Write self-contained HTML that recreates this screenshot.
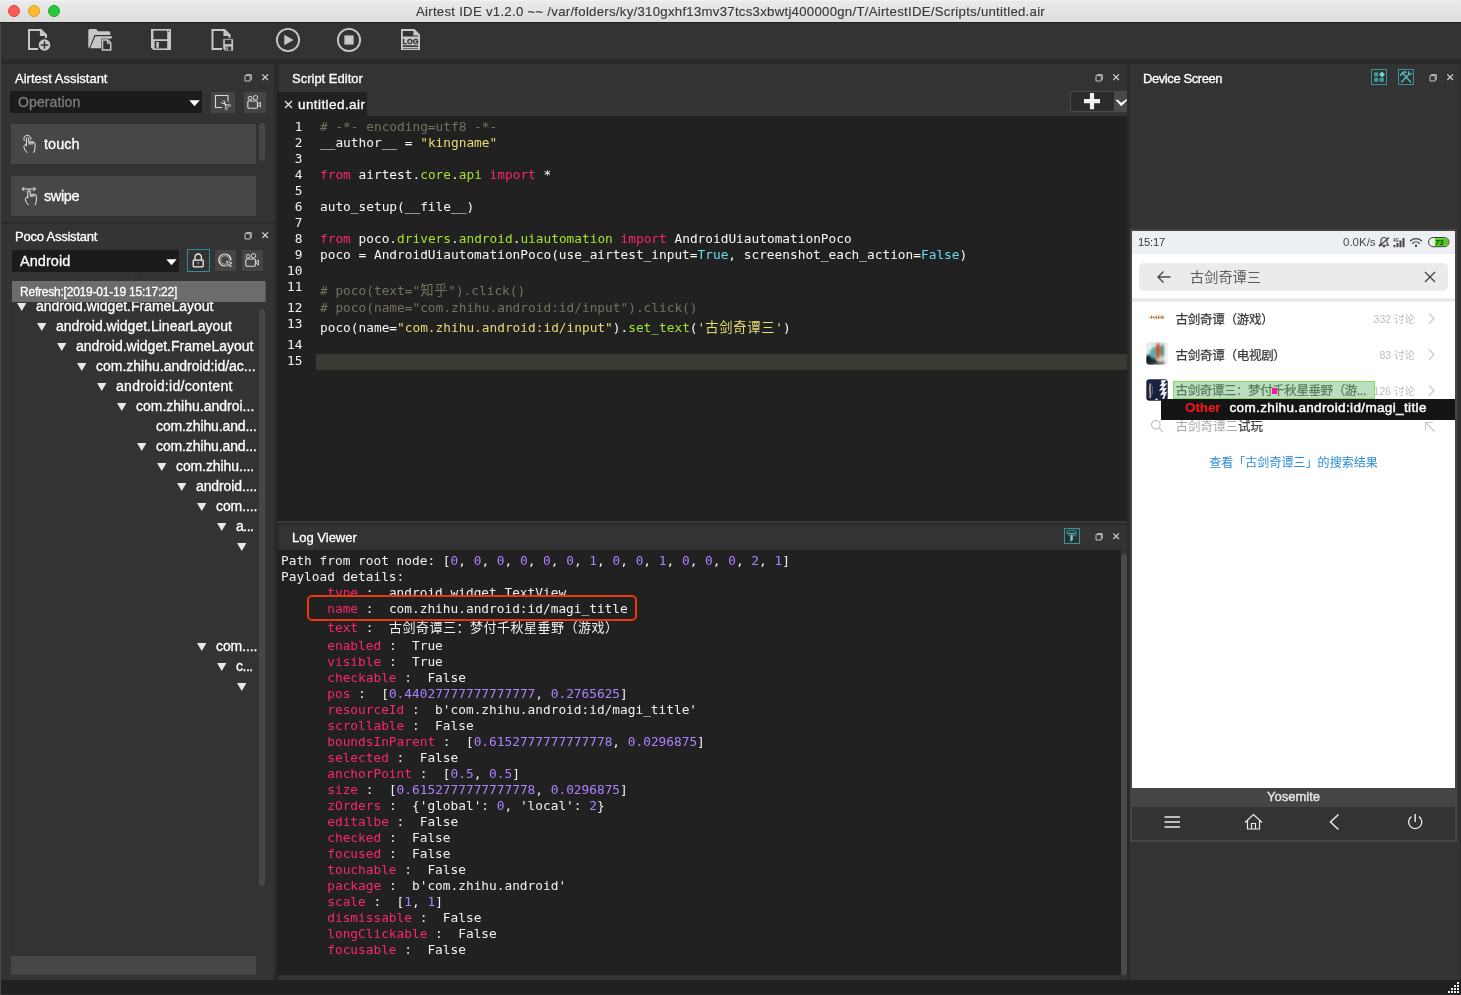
<!DOCTYPE html>
<html><head><meta charset="utf-8"><title>Airtest IDE</title>
<style>
*{box-sizing:border-box;margin:0;padding:0}
html,body{width:1461px;height:995px;overflow:hidden;background:#2a2a2a}
body{position:relative;font-family:"Liberation Sans","Noto Sans CJK SC",sans-serif;color:#f0f0f0;font-size:13px}
.abs{position:absolute}
#titlebar{left:0;top:0;width:1461px;height:22px;background:linear-gradient(#f4f4f4 0,#eaeaea 1.5px,#dcdcdc 100%);color:#3a3a3a;font-size:13.2px;letter-spacing:0.275px;text-align:center;line-height:23px;-webkit-text-stroke:0.15px #3a3a3a}
.tl{position:absolute;top:5px;width:12px;height:12px;border-radius:50%}
#toolbar{left:0;top:22px;width:1461px;height:37px;background:#333;border-top:1px solid #202020}
.panel{background:#333}
.ptitle{position:absolute;font-size:13px;color:#fff;white-space:nowrap;-webkit-text-stroke:0.3px #fff}
.ui{white-space:nowrap;-webkit-text-stroke:0.3px currentColor}
.mono{font-family:"DejaVu Sans Mono","Liberation Mono","Noto Sans CJK SC",monospace;font-size:12.8px;white-space:pre}
.pt{font-size:12.500px;line-height:17px;color:#3a3a3a;white-space:nowrap;-webkit-text-stroke:0.25px #3a3a3a}
.pt,.pr{filter:blur(0.25px)}
.pr{font-size:10.500px;line-height:14px;color:#bdbdbd;white-space:nowrap}
.cj2{font-size:13px;letter-spacing:0.5px}
.cj{font-size:13.3px;letter-spacing:0.7px}
#statusbar{left:0;top:980px;width:1461px;height:15px;background:#212121;border-bottom:1px solid #2b2b2b}
#root{position:absolute;left:0;top:0;width:1461px;height:995px;will-change:transform;background:#2a2a2a}
</style></head><body><div id="root">
<div id="titlebar" class="abs">Airtest IDE v1.2.0 ~~ /var/folders/ky/310gxhf13mv37tcs3xbwtj400000gn/T/AirtestIDE/Scripts/untitled.air
<div class="tl" style="left:8px;background:#fc5b57;border:0.5px solid #df4744"></div>
<div class="tl" style="left:28px;background:#fdbc2e;border:0.5px solid #de9f1b"></div>
<div class="tl" style="left:48px;background:#28c83f;border:0.5px solid #1ba92b"></div>
</div>
<div class="abs" style="left:0;top:23px;width:1px;height:972px;background:#474747;z-index:5"></div>
<div id="toolbar" class="abs"><svg class="abs" style="left:0;top:-1px" width="440" height="37" viewBox="0 22 440 37">
<g fill="none" stroke="#c5c7c9" stroke-width="2">
<!-- new file -->
<path d="M38 49H29V30H41L46 35V38"/><path d="M40.500 30V35.500H46Z" stroke-width="1.200" fill="#c5c7c9"/>
<!-- save-as file -->
<path d="M222 49H212.500V30H224.500L229.500 35V38"/><path d="M224 30V35.500H229.500Z" stroke-width="1.200" fill="#c5c7c9"/>
</g>
<circle cx="44.500" cy="45" r="5.800" fill="#c5c7c9"/>
<path d="M44.500 41.200V48.800M40.700 45H48.300" stroke="#333" stroke-width="1.500"/>
<!-- folder -->
<path d="M88.300 47.500V30.500Q88.300 29 89.800 29H96.200L98 31.300H109Q110.300 31.300 110.300 32.600V35H94.500L89.500 47.500Z" fill="#c5c7c9"/>
<path d="M95.300 36.200H112.200L107.500 48.300H90.200Z" fill="#c5c7c9"/>
<rect x="101.200" y="38.600" width="10.600" height="12.400" fill="#333"/>
<path d="M102.500 40H108L110.700 42.700V49.900H102.500Z" fill="#333" stroke="#c5c7c9" stroke-width="1.500"/>
<path d="M107.500 40V43.200H110.700" fill="none" stroke="#c5c7c9" stroke-width="1.200"/>
<!-- save -->
<path d="M151 29H171V50H153.500L151 47.500Z" fill="#c5c7c9"/>
<rect x="153.400" y="30.600" width="13.800" height="8.600" fill="#333"/>
<rect x="168.300" y="30.600" width="1.200" height="1.200" fill="#333"/>
<rect x="154.600" y="41" width="12.600" height="7.400" fill="#333"/>
<rect x="156.300" y="42" width="2.500" height="5.800" fill="#c5c7c9"/>
<!-- save-as floppy -->
<path d="M222.800 38.800H233.500V51H225L222.800 48.800Z" fill="#c5c7c9" stroke="#333" stroke-width="0.800"/>
<rect x="224.800" y="40" width="6.600" height="4.200" fill="#333"/>
<rect x="225.600" y="46.600" width="5.600" height="3.600" fill="#333"/>
<rect x="226.400" y="47.200" width="1.400" height="2.600" fill="#c5c7c9"/>
<!-- play -->
<circle cx="288" cy="40" r="11.100" fill="none" stroke="#c5c7c9" stroke-width="1.900"/>
<path d="M284.300 34.800L293.600 40L284.300 45.200Z" fill="#c5c7c9"/>
<!-- stop -->
<circle cx="349" cy="40" r="11.100" fill="none" stroke="#c5c7c9" stroke-width="1.900"/>
<rect x="344.400" y="35.400" width="9.200" height="9.200" fill="#c5c7c9"/>
<!-- log -->
<path d="M401 29H414.500L420 34.500V50H401Z" fill="#c5c7c9"/>
<path d="M402.800 31H413.400V35.600H418.200V36.600H402.800Z" fill="#333"/>
<rect x="402.800" y="45.300" width="15.400" height="1.600" fill="#333"/>
<rect x="402.800" y="48.100" width="15.400" height="0.600" fill="#333"/>
<text x="410.500" y="43.600" text-anchor="middle" font-family="Liberation Sans, sans-serif" font-weight="bold" font-size="7.400" fill="#333" stroke="#333" stroke-width="0.300">LOG</text>
</svg>
</div>

<!-- Airtest Assistant -->
<div id="airtest" class="abs panel" style="left:3px;top:64px;width:271px;height:158px;box-shadow:-2px 0 0 #333"><div class="ptitle" style="left:12px;top:7px">Airtest Assistant</div>
<svg class="abs fc" style="left:241px;top:9px" width="26" height="9" viewBox="0 0 26 9"><path d="M2.200 1.600H7.300V6.800M1 2.600H6.200V8H1Z" fill="none" stroke="#c2c2c2" stroke-width="1" stroke-linejoin="round"/><path d="M18.300 1.300L24 7M24 1.300L18.300 7" stroke="#d0d0d0" stroke-width="1.200" fill="none"/></svg>
<div class="abs" style="left:7px;top:27px;width:192px;height:22px;background:#1b1b1b"></div>
<div class="abs ui" style="left:15px;top:30px;font-size:14px;color:#7d7d7d;letter-spacing:0.1px">Operation</div>
<svg class="abs" style="left:186px;top:36px" width="11" height="7" viewBox="0 0 11 7"><path d="M0.300 0.300H10.700L5.500 6.300Z" fill="#fff"/></svg>
<div class="abs" style="left:207.500px;top:27.500px;width:24px;height:21px;background:#454545"></div>
<svg class="abs" style="left:210px;top:29px" width="20" height="18" viewBox="0 0 20 18"><path d="M9 14.500H2.500V2.500H15V8.500" fill="none" stroke="#dadada" stroke-width="1.100"/><path d="M8 9.600L15.500 12.400M10.800 7.200L13.200 14.600" stroke="#e0e0e0" stroke-width="1" fill="none"/><circle cx="16.300" cy="12.400" r="1.200" fill="none" stroke="#d0d0d0" stroke-width="0.800"/><circle cx="13.200" cy="15.500" r="1.200" fill="none" stroke="#d0d0d0" stroke-width="0.800"/></svg>
<div class="abs" style="left:240.500px;top:27.500px;width:22px;height:21px;background:#454545"></div>
<svg class="abs cam" style="left:243px;top:30px" width="18" height="16" viewBox="0 0 18 16"><rect x="1.800" y="7" width="9.600" height="7.200" rx="1.200" fill="none" stroke="#dadada" stroke-width="1.100"/><circle cx="4" cy="4.200" r="1.900" fill="none" stroke="#dadada" stroke-width="1"/><circle cx="9.500" cy="3.700" r="2.200" fill="none" stroke="#dadada" stroke-width="1"/><path d="M11.600 10.500L14.400 8.200V13L11.600 10.800" fill="none" stroke="#dadada" stroke-width="1"/></svg>
<!-- list -->
<div class="abs" style="left:8px;top:60px;width:245px;height:40px;background:#474747"></div>
<div class="abs" style="left:8px;top:112px;width:245px;height:40px;background:#474747"></div>
<div class="abs" style="left:256px;top:59px;width:6px;height:38px;background:#474747;border-radius:3px"></div>
<div class="abs ui" style="left:41px;top:72px;font-size:14.500px;color:#fff;letter-spacing:0.05px">touch</div>
<div class="abs ui" style="left:41px;top:124px;font-size:14.500px;color:#fff;letter-spacing:-0.4px">swipe</div>
<!-- touch icon -->
<svg class="abs" style="left:19px;top:70px" width="16" height="20" viewBox="0 0 16 20"><g fill="none" stroke="#ececec" stroke-width="1" stroke-linecap="round"><path d="M2.200 6.500A3.600 3.600 0 1 1 9 5.200"/><path d="M4.400 12V4.800Q4.400 3.600 5.600 3.600Q6.800 3.600 6.800 4.800V8H11.200Q13 8 13 10V13.500Q13 16 11.800 18.500"/><path d="M4.400 10.200L2.600 11.300Q1.500 12 2 13.600Q2.800 16.600 5 18.500"/><path d="M8.600 8V10M10.600 8V10" stroke-width="0.900"/></g><rect x="6.400" y="7.600" width="3.200" height="2.800" fill="#bdbdbd"/></svg>
<!-- swipe icon -->
<svg class="abs" style="left:18px;top:122px" width="18" height="20" viewBox="0 0 18 20"><g fill="none" stroke="#ececec" stroke-width="1" stroke-linecap="round"><path d="M1.200 3H14.400M3 1.200L1.200 3L3 4.800M12.600 1.200L14.400 3L12.600 4.800"/><g transform="translate(1.200,0)"><path d="M5.600 12V4.800H8V8.400H12.400Q14.200 8.400 14.200 10.400V13.900Q14.200 16.400 13 18.900"/><path d="M5.600 10.600L3.800 11.700Q2.700 12.400 3.200 14Q4 17 6.200 18.900"/><path d="M9.800 8.400V10.400M11.800 8.400V10.400" stroke-width="0.900"/></g></g><rect x="8.800" y="8" width="3.200" height="2.800" fill="#bdbdbd"/></svg>
</div>
<!-- Poco Assistant -->
<div id="poco" class="abs panel" style="left:3px;top:222px;width:271px;height:758px;box-shadow:-2px 0 0 #333"><div class="ptitle" style="left:12px;top:7px;letter-spacing:-0.22px">Poco Assistant</div>
<svg class="abs fc" style="left:241px;top:9px" width="26" height="9" viewBox="0 0 26 9"><path d="M2.200 1.600H7.300V6.800M1 2.600H6.200V8H1Z" fill="none" stroke="#c2c2c2" stroke-width="1" stroke-linejoin="round"/><path d="M18.300 1.300L24 7M24 1.300L18.300 7" stroke="#d0d0d0" stroke-width="1.200" fill="none"/></svg>
<div class="abs" style="left:9px;top:28px;width:167px;height:22px;background:#1b1b1b"></div>
<div class="abs ui" style="left:17px;top:31px;font-size:14.500px;color:#fff;letter-spacing:0.05px">Android</div>
<svg class="abs" style="left:163px;top:37px" width="11" height="7" viewBox="0 0 11 7"><path d="M0.300 0.300H10.700L5.500 6.300Z" fill="#fff"/></svg>
<div class="abs" style="left:184px;top:27px;width:23px;height:23px;background:#323232;border:1px solid #2f8e98"></div>
<svg class="abs" style="left:187px;top:30px" width="17" height="17" viewBox="0 0 17 17"><rect x="3.200" y="8.200" width="10" height="6.600" rx="0.800" fill="none" stroke="#efefef" stroke-width="1.300"/><path d="M5 8V5.200A3.200 3.200 0 0 1 11.400 5.200V8" fill="none" stroke="#efefef" stroke-width="1.300"/><path d="M7.200 10.800H9.200M7.700 12H8.700" stroke="#cfcfcf" stroke-width="0.700"/></svg>
<div class="abs" style="left:211.800px;top:27.600px;width:21.500px;height:21.700px;background:#454545"></div>
<svg class="abs" style="left:214px;top:30px" width="18" height="17" viewBox="0 0 18 17"><path d="M8.800 13.900A6 6 0 1 1 13.800 8.600" fill="none" stroke="#e6e6e6" stroke-width="1.200"/><path d="M8.800 12.200A4.300 4.300 0 1 1 12.200 8.200" fill="none" stroke="#bdbdbd" stroke-width="0.800"/><path d="M9.600 9.200L15 10.900L12.800 11.900L14.400 14.300L13.300 15L11.800 12.600L10.400 14.200Z" fill="#5a5a5a" stroke="#e6e6e6" stroke-width="0.800" stroke-linejoin="round"/></svg>
<div class="abs" style="left:238.600px;top:27.600px;width:21.800px;height:21.700px;background:#454545"></div>
<svg class="abs cam" style="left:241px;top:30px" width="18" height="16" viewBox="0 0 18 16"><rect x="1.800" y="7" width="9.600" height="7.200" rx="1.200" fill="none" stroke="#dadada" stroke-width="1.100"/><circle cx="4" cy="4.200" r="1.900" fill="none" stroke="#dadada" stroke-width="1"/><circle cx="9.500" cy="3.700" r="2.200" fill="none" stroke="#dadada" stroke-width="1"/><path d="M11.600 10.500L14.400 8.200V13L11.600 10.800" fill="none" stroke="#dadada" stroke-width="1"/></svg>
<div class="abs" style="left:132px;top:53px;width:6px;height:4px;border:1px solid #2b2b2b;border-bottom:none;border-radius:3px 3px 0 0"></div>
<svg class="abs" style="left:13.5px;top:80.5px" width="9.500" height="8" viewBox="0 0 9.500 8"><path d="M0 0H9.500L4.750 8Z" fill="#e9e9e9"/></svg>
<div class="abs ui tr" style="left:33px;top:76px;font-size:14px;line-height:17px;color:#fff;letter-spacing:0px">android.widget.FrameLayout</div>
<svg class="abs" style="left:33.5px;top:100.5px" width="9.500" height="8" viewBox="0 0 9.500 8"><path d="M0 0H9.500L4.750 8Z" fill="#e9e9e9"/></svg>
<div class="abs ui tr" style="left:53px;top:96px;font-size:14px;line-height:17px;color:#fff;letter-spacing:0px">android.widget.LinearLayout</div>
<svg class="abs" style="left:53.5px;top:120.5px" width="9.500" height="8" viewBox="0 0 9.500 8"><path d="M0 0H9.500L4.750 8Z" fill="#e9e9e9"/></svg>
<div class="abs ui tr" style="left:73px;top:116px;font-size:14px;line-height:17px;color:#fff;letter-spacing:0px">android.widget.FrameLayout</div>
<svg class="abs" style="left:73.5px;top:140.5px" width="9.500" height="8" viewBox="0 0 9.500 8"><path d="M0 0H9.500L4.750 8Z" fill="#e9e9e9"/></svg>
<div class="abs ui tr" style="left:93px;top:136px;font-size:14px;line-height:17px;color:#fff;letter-spacing:0px">com.zhihu.android:id/ac...</div>
<svg class="abs" style="left:93.5px;top:160.5px" width="9.500" height="8" viewBox="0 0 9.500 8"><path d="M0 0H9.500L4.750 8Z" fill="#e9e9e9"/></svg>
<div class="abs ui tr" style="left:113px;top:156px;font-size:14px;line-height:17px;color:#fff;letter-spacing:0.3px">android:id/content</div>
<svg class="abs" style="left:113.5px;top:180.5px" width="9.500" height="8" viewBox="0 0 9.500 8"><path d="M0 0H9.500L4.750 8Z" fill="#e9e9e9"/></svg>
<div class="abs ui tr" style="left:133px;top:176px;font-size:14px;line-height:17px;color:#fff;letter-spacing:0px">com.zhihu.androi...</div>
<div class="abs ui tr" style="left:153px;top:196px;font-size:14px;line-height:17px;color:#fff;letter-spacing:-0.12px">com.zhihu.and...</div>
<svg class="abs" style="left:133.5px;top:220.5px" width="9.500" height="8" viewBox="0 0 9.500 8"><path d="M0 0H9.500L4.750 8Z" fill="#e9e9e9"/></svg>
<div class="abs ui tr" style="left:153px;top:216px;font-size:14px;line-height:17px;color:#fff;letter-spacing:-0.12px">com.zhihu.and...</div>
<svg class="abs" style="left:153.5px;top:240.5px" width="9.500" height="8" viewBox="0 0 9.500 8"><path d="M0 0H9.500L4.750 8Z" fill="#e9e9e9"/></svg>
<div class="abs ui tr" style="left:173px;top:236px;font-size:14px;line-height:17px;color:#fff;letter-spacing:-0.1px">com.zhihu....</div>
<svg class="abs" style="left:173.5px;top:260.5px" width="9.500" height="8" viewBox="0 0 9.500 8"><path d="M0 0H9.500L4.750 8Z" fill="#e9e9e9"/></svg>
<div class="abs ui tr" style="left:193px;top:256px;font-size:14px;line-height:17px;color:#fff;letter-spacing:-0.1px">android....</div>
<svg class="abs" style="left:193.5px;top:280.5px" width="9.500" height="8" viewBox="0 0 9.500 8"><path d="M0 0H9.500L4.750 8Z" fill="#e9e9e9"/></svg>
<div class="abs ui tr" style="left:213px;top:276px;font-size:14px;line-height:17px;color:#fff;letter-spacing:-0.1px">com....</div>
<svg class="abs" style="left:213.5px;top:300.5px" width="9.500" height="8" viewBox="0 0 9.500 8"><path d="M0 0H9.500L4.750 8Z" fill="#e9e9e9"/></svg>
<div class="abs ui tr" style="left:233px;top:296px;font-size:14px;line-height:17px;color:#fff;letter-spacing:-0.5px">a...</div>
<svg class="abs" style="left:233.5px;top:320.5px" width="9.500" height="8" viewBox="0 0 9.500 8"><path d="M0 0H9.500L4.750 8Z" fill="#e9e9e9"/></svg>
<svg class="abs" style="left:193.5px;top:420.5px" width="9.500" height="8" viewBox="0 0 9.500 8"><path d="M0 0H9.500L4.750 8Z" fill="#e9e9e9"/></svg>
<div class="abs ui tr" style="left:213px;top:416px;font-size:14px;line-height:17px;color:#fff;letter-spacing:-0.1px">com....</div>
<svg class="abs" style="left:213.5px;top:440.5px" width="9.500" height="8" viewBox="0 0 9.500 8"><path d="M0 0H9.500L4.750 8Z" fill="#e9e9e9"/></svg>
<div class="abs ui tr" style="left:233px;top:436px;font-size:14px;line-height:17px;color:#fff;letter-spacing:-0.5px">c...</div>
<svg class="abs" style="left:233.5px;top:460.5px" width="9.500" height="8" viewBox="0 0 9.500 8"><path d="M0 0H9.500L4.750 8Z" fill="#e9e9e9"/></svg>
<div class="abs" style="left:9px;top:59px;width:254px;height:21px;background:#6c6c6c;border-right:1px solid #555"></div>
<div class="abs ui" style="left:17px;top:63px;font-size:12px;line-height:15px;color:#fff;letter-spacing:-0.22px">Refresh:[2019-01-19 15:17:22]</div>
<div class="abs" style="left:8px;top:80px;width:1px;height:673px;background:#2c2c2c"></div>
<div class="abs" style="left:256px;top:87px;width:6px;height:577px;background:#474747;border-radius:3px"></div>
<div class="abs" style="left:8px;top:734px;width:245px;height:19px;background:#474747"></div></div>
<div class="abs" style="left:1px;top:222px;width:273px;height:2px;background:#2c2c2c;z-index:3"></div>
<!-- Script Editor -->
<div id="editor" class="abs panel" style="left:279px;top:64px;width:848px;height:457px"><div class="ptitle" style="left:13px;top:7px">Script Editor</div>
<svg class="abs fc" style="left:816px;top:9px" width="26" height="9" viewBox="0 0 26 9"><path d="M2.200 1.600H7.300V6.800M1 2.600H6.200V8H1Z" fill="none" stroke="#c2c2c2" stroke-width="1" stroke-linejoin="round"/><path d="M18.300 1.300L24 7M24 1.300L18.300 7" stroke="#d0d0d0" stroke-width="1.200" fill="none"/></svg>

<div class="abs" style="left:-2px;top:457px;width:850px;height:2px;background:#383838"></div>
<div class="abs" style="left:-2px;top:27.500px;width:90px;height:25px;background:#212121"></div>
<svg class="abs" style="left:5px;top:36px" width="9" height="9" viewBox="0 0 9 9"><path d="M1 1L8 8M8 1L1 8" stroke="#e6e6e6" stroke-width="1.3" fill="none"/></svg>
<div class="ptitle" style="left:19px;top:33px;font-size:13.5px;letter-spacing:0.42px">untitled.air</div>
<div class="abs" style="left:791px;top:27px;width:57px;height:21px;background:#4a4a4a"></div>
<div class="abs" style="left:792px;top:28px;width:43px;height:19px;background:#2b2b2b"></div>
<svg class="abs" style="left:804px;top:28px" width="18" height="18" viewBox="0 0 18 18"><path d="M9 1V17.200M0.900 9.200H17.100" stroke="#eef2f5" stroke-width="4.200"/></svg>
<svg class="abs" style="left:836px;top:34px" width="12" height="9" viewBox="0 0 12 9"><path d="M0.500 1.800L6.200 8.300L12 2.600V1L6.200 4.800L2.800 1.800Z" fill="#fff"/></svg>
<div class="abs" style="left:-2px;top:52px;width:850px;height:405px;background:#212121"></div>
<div class="abs" style="left:37px;top:290px;width:811px;height:16px;background:#3a3a33"></div>
<div class="abs mono ln" style="left:0;top:55px;width:23.5px;height:16px;line-height:16px;text-align:right;color:#f2f2f2">1</div>
<div class="abs mono" style="left:41px;top:55px;height:16px;line-height:16px"><span style="color:#75715e"># -*- encoding=utf8 -*-</span></div>
<div class="abs mono ln" style="left:0;top:71px;width:23.5px;height:16px;line-height:16px;text-align:right;color:#f2f2f2">2</div>
<div class="abs mono" style="left:41px;top:71px;height:16px;line-height:16px"><span style="color:#f8f8f2">__author__ = </span><span style="color:#e6db74">"kingname"</span></div>
<div class="abs mono ln" style="left:0;top:87px;width:23.5px;height:16px;line-height:16px;text-align:right;color:#f2f2f2">3</div>
<div class="abs mono ln" style="left:0;top:103px;width:23.5px;height:16px;line-height:16px;text-align:right;color:#f2f2f2">4</div>
<div class="abs mono" style="left:41px;top:103px;height:16px;line-height:16px"><span style="color:#f92672">from</span><span style="color:#f8f8f2"> airtest.</span><span style="color:#a6e22e">core</span><span style="color:#f8f8f2">.</span><span style="color:#a6e22e">api</span><span style="color:#f8f8f2"> </span><span style="color:#f92672">import</span><span style="color:#f8f8f2"> *</span></div>
<div class="abs mono ln" style="left:0;top:119px;width:23.5px;height:16px;line-height:16px;text-align:right;color:#f2f2f2">5</div>
<div class="abs mono ln" style="left:0;top:135px;width:23.5px;height:16px;line-height:16px;text-align:right;color:#f2f2f2">6</div>
<div class="abs mono" style="left:41px;top:135px;height:16px;line-height:16px"><span style="color:#f8f8f2">auto_setup(__file__)</span></div>
<div class="abs mono ln" style="left:0;top:151px;width:23.5px;height:16px;line-height:16px;text-align:right;color:#f2f2f2">7</div>
<div class="abs mono ln" style="left:0;top:167px;width:23.5px;height:16px;line-height:16px;text-align:right;color:#f2f2f2">8</div>
<div class="abs mono" style="left:41px;top:167px;height:16px;line-height:16px"><span style="color:#f92672">from</span><span style="color:#f8f8f2"> poco.</span><span style="color:#a6e22e">drivers</span><span style="color:#f8f8f2">.</span><span style="color:#a6e22e">android</span><span style="color:#f8f8f2">.</span><span style="color:#a6e22e">uiautomation</span><span style="color:#f8f8f2"> </span><span style="color:#f92672">import</span><span style="color:#f8f8f2"> AndroidUiautomationPoco</span></div>
<div class="abs mono ln" style="left:0;top:183px;width:23.5px;height:16px;line-height:16px;text-align:right;color:#f2f2f2">9</div>
<div class="abs mono" style="left:41px;top:183px;height:16px;line-height:16px"><span style="color:#f8f8f2">poco = AndroidUiautomationPoco(use_airtest_input=</span><span style="color:#66d9ef">True</span><span style="color:#f8f8f2">, screenshot_each_action=</span><span style="color:#66d9ef">False</span><span style="color:#f8f8f2">)</span></div>
<div class="abs mono ln" style="left:0;top:199px;width:23.5px;height:16px;line-height:16px;text-align:right;color:#f2f2f2">10</div>
<div class="abs mono ln" style="left:0;top:215px;width:23.5px;height:16px;line-height:16px;text-align:right;color:#f2f2f2">11</div>
<div class="abs mono" style="left:41px;top:219px;height:16px;line-height:16px"><span style="color:#75715e"># poco(text="<span class="cj">知乎</span>").click()</span></div>
<div class="abs mono ln" style="left:0;top:236px;width:23.5px;height:16px;line-height:16px;text-align:right;color:#f2f2f2">12</div>
<div class="abs mono" style="left:41px;top:236px;height:16px;line-height:16px"><span style="color:#75715e"># poco(name="com.zhihu.android:id/input").click()</span></div>
<div class="abs mono ln" style="left:0;top:252px;width:23.5px;height:16px;line-height:16px;text-align:right;color:#f2f2f2">13</div>
<div class="abs mono" style="left:41px;top:256px;height:16px;line-height:16px"><span style="color:#f8f8f2">poco(name=</span><span style="color:#e6db74">"com.zhihu.android:id/input"</span><span style="color:#f8f8f2">).</span><span style="color:#a6e22e">set_text</span><span style="color:#f8f8f2">(</span><span style="color:#e6db74">'<span class="cj">古剑奇谭三</span>'</span><span style="color:#f8f8f2">)</span></div>
<div class="abs mono ln" style="left:0;top:273px;width:23.5px;height:16px;line-height:16px;text-align:right;color:#f2f2f2">14</div>
<div class="abs mono ln" style="left:0;top:289px;width:23.5px;height:16px;line-height:16px;text-align:right;color:#f2f2f2">15</div></div>
<!-- Log Viewer -->
<div id="log" class="abs panel" style="left:279px;top:525px;width:848px;height:455px"><div class="ptitle" style="left:13px;top:5px">Log Viewer</div>
<div class="abs" style="left:785px;top:3px;width:16px;height:16px;border:1px solid #37949b;background:#2f2f2f"></div>
<svg class="abs" style="left:785px;top:3px" width="16" height="16" viewBox="0 0 16 16"><ellipse cx="7.600" cy="3.700" rx="5.200" ry="1.500" fill="none" stroke="#3f9ea4" stroke-width="0.900"/><path d="M2.600 4.200Q4 7.500 6.600 8.200V13.400L8.600 12V8.200Q11.200 7.500 12.600 4.200" fill="none" stroke="#3f9ea4" stroke-width="0.900"/><path d="M6.800 6.500H8.500V12L6.800 13.200Z" fill="#72d6d8"/><path d="M4.500 5.800H10.700" stroke="#56b9bd" stroke-width="0.800"/><circle cx="12" cy="7.300" r="1.100" fill="none" stroke="#2f7f85" stroke-width="0.600"/></svg>
<svg class="abs fc" style="left:816px;top:7px" width="26" height="9" viewBox="0 0 26 9"><path d="M2.200 1.600H7.300V6.800M1 2.600H6.200V8H1Z" fill="none" stroke="#c2c2c2" stroke-width="1" stroke-linejoin="round"/><path d="M18.300 1.300L24 7M24 1.300L18.300 7" stroke="#d0d0d0" stroke-width="1.200" fill="none"/></svg>

<div class="abs" style="left:-2px;top:25px;width:844px;height:425px;background:#212121"></div>
<div class="abs" style="left:842px;top:29px;width:6px;height:421px;background:#4a4a4a;border-radius:3px"></div>
<div class="abs mono" style="left:2px;top:28px;height:16px;line-height:16px"><span style="color:#f0f0f0">Path from root node: </span><span style="color:#f0f0f0">[</span><span style="color:#ae81ff">0</span><span style="color:#f0f0f0">, </span><span style="color:#ae81ff">0</span><span style="color:#f0f0f0">, </span><span style="color:#ae81ff">0</span><span style="color:#f0f0f0">, </span><span style="color:#ae81ff">0</span><span style="color:#f0f0f0">, </span><span style="color:#ae81ff">0</span><span style="color:#f0f0f0">, </span><span style="color:#ae81ff">0</span><span style="color:#f0f0f0">, </span><span style="color:#ae81ff">1</span><span style="color:#f0f0f0">, </span><span style="color:#ae81ff">0</span><span style="color:#f0f0f0">, </span><span style="color:#ae81ff">0</span><span style="color:#f0f0f0">, </span><span style="color:#ae81ff">1</span><span style="color:#f0f0f0">, </span><span style="color:#ae81ff">0</span><span style="color:#f0f0f0">, </span><span style="color:#ae81ff">0</span><span style="color:#f0f0f0">, </span><span style="color:#ae81ff">0</span><span style="color:#f0f0f0">, </span><span style="color:#ae81ff">2</span><span style="color:#f0f0f0">, </span><span style="color:#ae81ff">1</span><span style="color:#f0f0f0">]</span></div>
<div class="abs mono" style="left:2px;top:44px;height:16px;line-height:16px"><span style="color:#f0f0f0">Payload details:</span></div>
<div class="abs mono" style="left:2px;top:60px;height:16px;line-height:16px"><span style="color:#f0f0f0">      </span><span style="color:#f92672">type</span><span style="color:#f0f0f0"> :  </span><span style="color:#f0f0f0">android.widget.TextView</span></div>
<div class="abs" style="left:28px;top:70px;width:330px;height:26px;background:#212121;border:2px solid #e8380d;border-radius:5px"></div>
<div class="abs mono" style="left:2px;top:76px;height:16px;line-height:16px"><span style="color:#f0f0f0">      </span><span style="color:#f92672">name</span><span style="color:#f0f0f0"> :  </span><span style="color:#f0f0f0">com.zhihu.android:id/magi_title</span></div>
<div class="abs mono" style="left:2px;top:95px;height:16px;line-height:16px"><span style="color:#f0f0f0">      </span><span style="color:#f92672">text</span><span style="color:#f0f0f0"> :  </span><span class="cj2" style="color:#f0f0f0">古剑奇谭三：梦付千秋星垂野（游戏）</span></div>
<div class="abs mono" style="left:2px;top:113px;height:16px;line-height:16px"><span style="color:#f0f0f0">      </span><span style="color:#f92672">enabled</span><span style="color:#f0f0f0"> :  </span><span style="color:#f0f0f0">True</span></div>
<div class="abs mono" style="left:2px;top:129px;height:16px;line-height:16px"><span style="color:#f0f0f0">      </span><span style="color:#f92672">visible</span><span style="color:#f0f0f0"> :  </span><span style="color:#f0f0f0">True</span></div>
<div class="abs mono" style="left:2px;top:145px;height:16px;line-height:16px"><span style="color:#f0f0f0">      </span><span style="color:#f92672">checkable</span><span style="color:#f0f0f0"> :  </span><span style="color:#f0f0f0">False</span></div>
<div class="abs mono" style="left:2px;top:161px;height:16px;line-height:16px"><span style="color:#f0f0f0">      </span><span style="color:#f92672">pos</span><span style="color:#f0f0f0"> :  </span><span style="color:#f0f0f0">[</span><span style="color:#ae81ff">0.44027777777777777</span><span style="color:#f0f0f0">, </span><span style="color:#ae81ff">0.2765625</span><span style="color:#f0f0f0">]</span></div>
<div class="abs mono" style="left:2px;top:177px;height:16px;line-height:16px"><span style="color:#f0f0f0">      </span><span style="color:#f92672">resourceId</span><span style="color:#f0f0f0"> :  </span><span style="color:#f0f0f0">b'com.zhihu.android:id/magi_title'</span></div>
<div class="abs mono" style="left:2px;top:193px;height:16px;line-height:16px"><span style="color:#f0f0f0">      </span><span style="color:#f92672">scrollable</span><span style="color:#f0f0f0"> :  </span><span style="color:#f0f0f0">False</span></div>
<div class="abs mono" style="left:2px;top:209px;height:16px;line-height:16px"><span style="color:#f0f0f0">      </span><span style="color:#f92672">boundsInParent</span><span style="color:#f0f0f0"> :  </span><span style="color:#f0f0f0">[</span><span style="color:#ae81ff">0.6152777777777778</span><span style="color:#f0f0f0">, </span><span style="color:#ae81ff">0.0296875</span><span style="color:#f0f0f0">]</span></div>
<div class="abs mono" style="left:2px;top:225px;height:16px;line-height:16px"><span style="color:#f0f0f0">      </span><span style="color:#f92672">selected</span><span style="color:#f0f0f0"> :  </span><span style="color:#f0f0f0">False</span></div>
<div class="abs mono" style="left:2px;top:241px;height:16px;line-height:16px"><span style="color:#f0f0f0">      </span><span style="color:#f92672">anchorPoint</span><span style="color:#f0f0f0"> :  </span><span style="color:#f0f0f0">[</span><span style="color:#ae81ff">0.5</span><span style="color:#f0f0f0">, </span><span style="color:#ae81ff">0.5</span><span style="color:#f0f0f0">]</span></div>
<div class="abs mono" style="left:2px;top:257px;height:16px;line-height:16px"><span style="color:#f0f0f0">      </span><span style="color:#f92672">size</span><span style="color:#f0f0f0"> :  </span><span style="color:#f0f0f0">[</span><span style="color:#ae81ff">0.6152777777777778</span><span style="color:#f0f0f0">, </span><span style="color:#ae81ff">0.0296875</span><span style="color:#f0f0f0">]</span></div>
<div class="abs mono" style="left:2px;top:273px;height:16px;line-height:16px"><span style="color:#f0f0f0">      </span><span style="color:#f92672">zOrders</span><span style="color:#f0f0f0"> :  </span><span style="color:#f0f0f0">{'global': </span><span style="color:#ae81ff">0</span><span style="color:#f0f0f0">, 'local': </span><span style="color:#ae81ff">2</span><span style="color:#f0f0f0">}</span></div>
<div class="abs mono" style="left:2px;top:289px;height:16px;line-height:16px"><span style="color:#f0f0f0">      </span><span style="color:#f92672">editalbe</span><span style="color:#f0f0f0"> :  </span><span style="color:#f0f0f0">False</span></div>
<div class="abs mono" style="left:2px;top:305px;height:16px;line-height:16px"><span style="color:#f0f0f0">      </span><span style="color:#f92672">checked</span><span style="color:#f0f0f0"> :  </span><span style="color:#f0f0f0">False</span></div>
<div class="abs mono" style="left:2px;top:321px;height:16px;line-height:16px"><span style="color:#f0f0f0">      </span><span style="color:#f92672">focused</span><span style="color:#f0f0f0"> :  </span><span style="color:#f0f0f0">False</span></div>
<div class="abs mono" style="left:2px;top:337px;height:16px;line-height:16px"><span style="color:#f0f0f0">      </span><span style="color:#f92672">touchable</span><span style="color:#f0f0f0"> :  </span><span style="color:#f0f0f0">False</span></div>
<div class="abs mono" style="left:2px;top:353px;height:16px;line-height:16px"><span style="color:#f0f0f0">      </span><span style="color:#f92672">package</span><span style="color:#f0f0f0"> :  </span><span style="color:#f0f0f0">b'com.zhihu.android'</span></div>
<div class="abs mono" style="left:2px;top:369px;height:16px;line-height:16px"><span style="color:#f0f0f0">      </span><span style="color:#f92672">scale</span><span style="color:#f0f0f0"> :  </span><span style="color:#f0f0f0">[</span><span style="color:#ae81ff">1</span><span style="color:#f0f0f0">, </span><span style="color:#ae81ff">1</span><span style="color:#f0f0f0">]</span></div>
<div class="abs mono" style="left:2px;top:385px;height:16px;line-height:16px"><span style="color:#f0f0f0">      </span><span style="color:#f92672">dismissable</span><span style="color:#f0f0f0"> :  </span><span style="color:#f0f0f0">False</span></div>
<div class="abs mono" style="left:2px;top:401px;height:16px;line-height:16px"><span style="color:#f0f0f0">      </span><span style="color:#f92672">longClickable</span><span style="color:#f0f0f0"> :  </span><span style="color:#f0f0f0">False</span></div>
<div class="abs mono" style="left:2px;top:417px;height:16px;line-height:16px"><span style="color:#f0f0f0">      </span><span style="color:#f92672">focusable</span><span style="color:#f0f0f0"> :  </span><span style="color:#f0f0f0">False</span></div></div>
<!-- Device Screen -->
<div id="device" class="abs panel" style="left:1130px;top:64px;width:330px;height:916px"><div class="ptitle" style="left:13px;top:7px;letter-spacing:-0.42px">Device Screen</div>
<!-- header icons : panel origin (1130,64) -->
<div class="abs" style="left:241px;top:5px;width:16px;height:16px;border:1px solid #37949b;background:#303030"></div>
<svg class="abs" style="left:241px;top:5px" width="16" height="16" viewBox="0 0 16 16"><rect x="3.200" y="3.400" width="4" height="4" fill="#3f9ea4"/><rect x="3.200" y="8.800" width="4" height="4" fill="#3f9ea4"/><rect x="8.600" y="8.800" width="4.200" height="4" fill="#3f9ea4"/><path d="M11 2.400L14 5.400L11 8.400L8 5.400Z" fill="#72d6d8"/></svg>
<div class="abs" style="left:268px;top:5px;width:16px;height:16px;border:1px solid #37949b;background:#303030"></div>
<svg class="abs" style="left:268px;top:5px" width="16" height="16" viewBox="0 0 16 16"><g stroke="#52b6bb" fill="none" stroke-linecap="round"><path d="M3.600 13L11.400 4.400" stroke-width="1.500"/><path d="M4.800 4.200L12.600 13" stroke-width="1.500"/><path d="M2.600 6L5 3.600Q6.400 2.400 8 3.200" stroke-width="1.800"/><path d="M10.800 2.600Q10 4.600 11.400 5.400Q12.800 6 13.800 4.400" stroke-width="1.300"/></g></svg>
<svg class="abs fc" style="left:299px;top:9px" width="26" height="9" viewBox="0 0 26 9"><path d="M2.200 1.600H7.300V6.800M1 2.600H6.200V8H1Z" fill="none" stroke="#c2c2c2" stroke-width="1" stroke-linejoin="round"/><path d="M18.300 1.300L24 7M24 1.300L18.300 7" stroke="#d0d0d0" stroke-width="1.200" fill="none"/></svg>
<!-- phone frame: abs x1130..1457,y229..842 -->
<div class="abs" style="left:0;top:165px;width:327px;height:613px;background:#454545"></div>
<div id="phone" class="abs" style="left:2px;top:167px;width:323px;height:557px;background:#fff;overflow:hidden;font-family:'Liberation Sans','Noto Sans CJK SC',sans-serif"><!-- phone origin abs (1132,231) -->
<div class="abs" style="left:0;top:0;width:323px;height:22.500px;background:#eceff3"></div>
<div class="abs" style="left:6px;top:5px;font-size:11.200px;line-height:13px;color:#3a3a3a;letter-spacing:-0.2px">15:17</div>
<div class="abs" style="left:211px;top:5px;font-size:11.500px;line-height:13px;color:#4a4a4a;letter-spacing:0px">0.0K/s</div>
<svg class="abs" style="left:244px;top:4px" width="76" height="15" viewBox="1376 235 76 15">
<g fill="none" stroke="#444" stroke-width="1.100"><path d="M1379.500 245.200H1388.500L1387 243V240.500A3 3 0 0 0 1381 240.500V243Z"/><path d="M1379 246.500L1389 237.500"/><path d="M1382.800 246.600H1385.200" stroke-width="1.400"/></g>
<g fill="#444"><rect x="1393.500" y="245" width="2" height="2.200"/><rect x="1396.500" y="243" width="2" height="4.200"/><rect x="1399.500" y="240.500" width="2" height="6.700"/><rect x="1402.500" y="238" width="2" height="9.200"/></g>
<text x="1393" y="241.500" font-family="Liberation Sans, sans-serif" font-size="4.500" font-weight="bold" fill="#444">4G</text>
<g fill="none" stroke="#444" stroke-width="1.300" stroke-linecap="round"><path d="M1410.500 240.800A8 8 0 0 1 1421.500 240.800"/><path d="M1412.600 243.200A5 5 0 0 1 1419.400 243.200"/></g><circle cx="1416" cy="245.800" r="1.200" fill="#444"/>
<rect x="1428.500" y="237.500" width="20.500" height="9.200" rx="4.600" fill="#e8f3e0" stroke="#3a3a3a" stroke-width="1"/>
<path d="M1435 238.300H1444.500A3.800 3.800 0 0 1 1444.500 245.900H1435Z" fill="#55c81e"/>
<text x="1439.500" y="245" text-anchor="middle" font-family="Liberation Sans, sans-serif" font-size="7" font-weight="bold" font-style="italic" fill="#0c4a08">73</text>
</svg>
<!-- search bar abs x1139..1448 y263..290.5 -->
<div class="abs" style="left:7px;top:32px;width:309px;height:28px;background:#ebebeb;border-radius:5px"></div>
<svg class="abs" style="left:24px;top:39px" width="16" height="14" viewBox="0 0 16 14"><path d="M14.500 7H2M7.500 1.500L2 7L7.500 12.500" fill="none" stroke="#4a4a4a" stroke-width="1.400"/></svg>
<div class="abs" style="left:58px;top:37px;font-size:14.200px;line-height:18px;color:#5c5c5c;white-space:nowrap">古剑奇谭三</div>
<svg class="abs" style="left:292px;top:40px" width="12" height="12" viewBox="0 0 12 12"><path d="M1 1L11 11M11 1L1 11" stroke="#444" stroke-width="1.300"/></svg>
<div class="abs" style="left:0;top:66px;width:323px;height:4px;background:linear-gradient(rgba(0,0,0,0),rgba(0,0,0,0.13))"></div>
<div class="abs" style="left:0;top:70px;width:323px;height:2px;background:linear-gradient(rgba(0,0,0,0.06),rgba(0,0,0,0))"></div>
<!-- rows -->
<svg class="abs" style="left:15px;top:81px" width="20" height="10" viewBox="0 0 20 10"><g filter="url(#bl1)"><path d="M1.500 5.400H17.800" stroke="#d9a46e" stroke-width="0.900" fill="none"/><path d="M4.500 3.500V6.800M6.200 4.200L7.500 6.800M9 3.200L9.800 7M12 3.400L11.600 7M13.600 4L14.600 6.600M15.800 3.200V7" stroke="#b4703a" stroke-width="1" fill="none"/></g><defs><filter id="bl1"><feGaussianBlur stdDeviation="0.350"/></filter></defs></svg>
<div class="abs pt" style="left:43.600px;top:80.500px;letter-spacing:-0.28px">古剑奇谭（游戏）</div>
<div class="abs pr" style="right:40px;top:81px">332 讨论</div>
<svg class="abs" style="left:296px;top:82px" width="7" height="11" viewBox="0 0 7 11"><path d="M1 0.500L6 5.500L1 10.500" fill="none" stroke="#c8c8c8" stroke-width="1.100"/></svg>
<svg class="abs" style="left:14px;top:111px" width="22" height="23" viewBox="0 0 22 23"><defs><clipPath id="c2"><rect x="0.300" y="0.300" width="21.400" height="22.400" rx="3"/></clipPath><filter id="bl2"><feGaussianBlur stdDeviation="0.900"/></filter></defs><g clip-path="url(#c2)"><rect width="22" height="23" fill="#dde5e3"/><g filter="url(#bl2)"><ellipse cx="4" cy="18" rx="6" ry="5.500" fill="#15242e"/><ellipse cx="7.500" cy="10.500" rx="3.600" ry="6" fill="#4fb3b3"/><ellipse cx="12" cy="9" rx="2.400" ry="8" fill="#c8502c"/><ellipse cx="16.500" cy="9" rx="2.200" ry="6.500" fill="#4a8f72"/><ellipse cx="11" cy="20.500" rx="8" ry="2" fill="#2a3138"/><ellipse cx="14.500" cy="19" rx="3" ry="1.500" fill="#c9c1a8"/><ellipse cx="3" cy="4" rx="3.500" ry="4" fill="#e9efee"/><ellipse cx="21" cy="11" rx="2.500" ry="12" fill="#f4f6f5"/></g></g></svg>
<div class="abs pt" style="left:43.600px;top:116.500px;letter-spacing:-0.28px">古剑奇谭（电视剧）</div>
<div class="abs pr" style="right:40px;top:117px">83 讨论</div>
<svg class="abs" style="left:296px;top:118px" width="7" height="11" viewBox="0 0 7 11"><path d="M1 0.500L6 5.500L1 10.500" fill="none" stroke="#c8c8c8" stroke-width="1.100"/></svg>
<svg class="abs" style="left:14px;top:148px" width="22" height="22" viewBox="0 0 22 22"><defs><clipPath id="c3"><rect x="0.300" y="0.300" width="21.400" height="21.400" rx="3"/></clipPath><filter id="bl3"><feGaussianBlur stdDeviation="0.450"/></filter></defs><g clip-path="url(#c3)"><rect width="22" height="22" fill="#1b2142"/><g filter="url(#bl3)"><path d="M4.500 4.500Q3.200 9 4.200 13.500Q4.800 16 4 19" stroke="#aaa68e" stroke-width="1.800" fill="none"/><path d="M6.300 7V15" stroke="#6d6c62" stroke-width="1" fill="none"/><path d="M15 2.500L18.500 2L15.500 6L19 5.500L15 10.500L19 10L16 15L19.500 14L17 20" stroke="#f4f4f4" stroke-width="1.900" fill="none"/><path d="M9 21Q10.500 17.500 12 21Z" fill="#e8e4d6"/></g></g></svg>
<div class="abs pt" style="left:43.600px;top:151.500px;letter-spacing:-0.42px">古剑奇谭三：梦付千秋星垂野（游...</div>
<div class="abs pr" style="right:40px;top:153px">126 讨论</div>
<svg class="abs" style="left:296px;top:154px" width="7" height="11" viewBox="0 0 7 11"><path d="M1 0.500L6 5.500L1 10.500" fill="none" stroke="#c8c8c8" stroke-width="1.100"/></svg>
<div class="abs" style="left:41px;top:150px;width:202px;height:18px;background:rgba(120,190,125,0.5);border:1px solid #8dda5c"></div>
<div class="abs" style="left:140px;top:157px;width:5px;height:5.500px;background:#ff14a0"></div>
<!-- row 4 -->
<svg class="abs" style="left:18px;top:188px" width="14" height="14" viewBox="0 0 14 14"><circle cx="5.800" cy="5.800" r="4.300" fill="none" stroke="#c2c2c2" stroke-width="1.100"/><path d="M9 9L12.800 12.800" stroke="#c2c2c2" stroke-width="1.100"/></svg>
<div class="abs pt" style="left:43.600px;top:188px;-webkit-text-stroke:0"><span style="color:#a9a9a9">古剑奇谭三</span><span style="color:#444;-webkit-text-stroke:0.25px #444">试玩</span></div>
<svg class="abs" style="left:292px;top:190px" width="12" height="12" viewBox="0 0 12 12"><path d="M1.500 9V1.500H9M1.500 1.500L10.500 10.500" fill="none" stroke="#c8c8c8" stroke-width="1.100"/></svg>
<!-- tooltip abs x1161..1455 y399.3..420 -->
<div class="abs" style="left:29px;top:168.300px;width:294px;height:20.700px;background:#141414"></div>
<div class="abs" style="left:53px;top:167px;font-size:13.500px;line-height:19px;font-weight:bold;color:#ff1515;letter-spacing:-0.1px;white-space:nowrap">Other</div>
<div class="abs ui" style="left:97.500px;top:167px;font-size:13.500px;line-height:19px;color:#fff;white-space:nowrap;letter-spacing:0.36px;-webkit-text-stroke:0.45px #fff">com.zhihu.android:id/magi_title</div>
<!-- link -->
<div class="abs" style="left:0;top:224px;width:323px;text-align:center;font-size:12px;line-height:17px;color:#2b8bd8;white-space:nowrap;letter-spacing:0.05px">查看「古剑奇谭三」的搜索结果</div>
</div>
<div class="abs ui" style="left:2px;top:724px;width:323px;height:18px;line-height:18px;text-align:center;font-size:13px;color:#e6e6e6;letter-spacing:0px;-webkit-text-stroke:0.4px #e6e6e6">Yosemite</div>
<div class="abs" style="left:2px;top:743px;width:323px;height:33px;background:#333"></div>
<svg class="abs" style="left:2px;top:743px" width="323" height="33" viewBox="1132 807 323 33">
<g fill="none" stroke="#ececec" stroke-width="1.400">
<path d="M1164.500 817H1180M1164.500 822H1180M1164.500 827H1180"/>
<path d="M1245 822.500L1253.500 814.500L1262 822.500M1247.500 821V829H1259.500V821M1251.500 829V823.500H1255.500V829" stroke-width="1.200"/>
<path d="M1338.500 814.500L1330.500 822L1338.500 829.500" stroke-width="1.500"/>
<path d="M1415.200 814V822" stroke-width="1.400"/><path d="M1411.400 816.600A6.600 6.600 0 1 0 1419 816.600" stroke-width="1.300"/>
</g></svg>
</div>
<div id="statusbar" class="abs"><svg class="abs" style="left:1447px;top:1px" width="14" height="14" viewBox="0 0 14 14"><g fill="#f0f0f0"><rect x="10" y="1" width="2" height="2"/><rect x="7" y="4" width="2" height="2"/><rect x="10" y="4" width="2" height="2"/><rect x="4" y="7" width="2" height="2"/><rect x="7" y="7" width="2" height="2"/><rect x="10" y="7" width="2" height="2"/><rect x="1" y="10" width="2" height="2"/><rect x="4" y="10" width="2" height="2"/><rect x="7" y="10" width="2" height="2"/><rect x="10" y="10" width="2" height="2"/></g></svg>
</div>
</div></body></html>
